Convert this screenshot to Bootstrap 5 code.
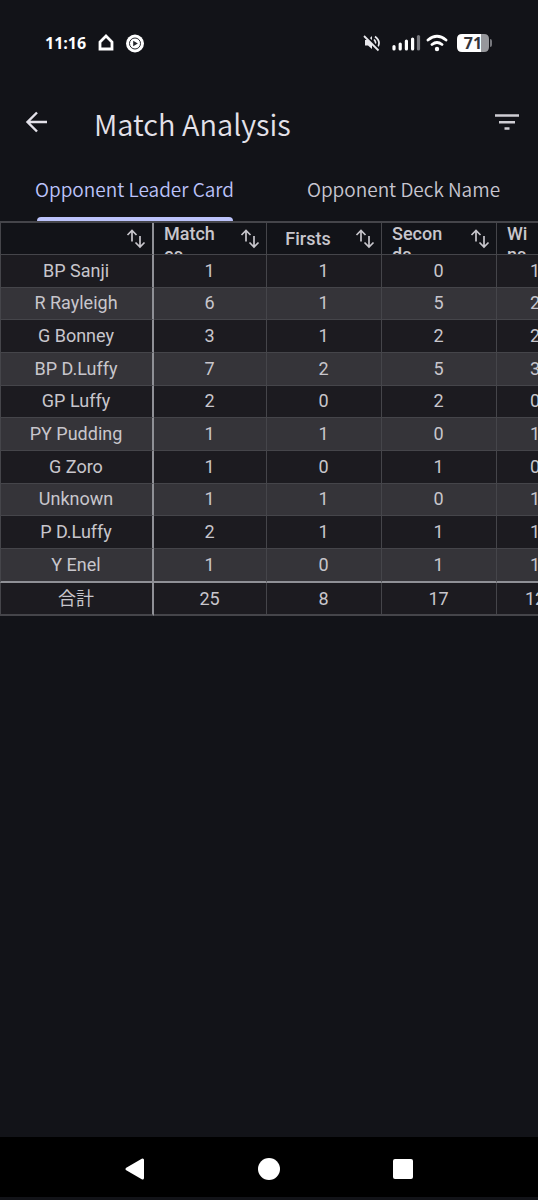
<!DOCTYPE html>
<html lang="en" data-bs-theme="dark">
<head>
<meta charset="utf-8">
<meta name="viewport" content="width=device-width, initial-scale=1">
<title>Match Analysis</title>
<link href="https://cdn.jsdelivr.net/npm/bootstrap@5.3.0/dist/css/bootstrap.min.css" rel="stylesheet">
<style>
  :root { --app-bg: #121318; --line: #45454a; --line-strong: #8f9096; --accent: #bcc3fb; }
  body { background: var(--app-bg); color: #e3e1e9; font-family: Roboto, "Noto Sans CJK JP", sans-serif; }
  svg { display: block; flex: none; }
  .status-bar { height: 86px; padding: 0 46px 0 45px; color: #fff; }
  .clock { font: 700 16px/24px "Open Sans", sans-serif; }
  .battery { position: relative; width: 35px; height: 18px; }
  .battery-level { position: absolute; inset: 0 3px 0 0; color: #33343a; font: 700 16px/18px "Open Sans", sans-serif; text-align: center; }
  .app-bar { height: 72px; padding: 0 18px 0 24px; }
  .app-title { color: #e3e1e9; font: 350 29px/40px "Noto Sans CJK JP", sans-serif; margin: 2px 0 0 45px; }
  .icon-button { border: 0; padding: 0; background: none; color: inherit; }
  .tabs { height: 63px; }
  .tab-link { border: 0; background: none; padding: 0; color: #c7c5d0; font: 350 19px/28px "Noto Sans CJK JP", sans-serif; }
  .tab-text { display: flex; align-items: center; height: 63px; padding-bottom: 2px; }
  .tab-link.active { color: var(--accent); position: relative; }
  .tab-link.active::after { content: ""; position: absolute; left: 50%; bottom: 0; width: 196px; height: 4px; transform: translateX(-50%); border-radius: 4px 4px 0 0; background: var(--accent); }
  .table-scroll { overflow: hidden; }
  .stats { width: 575px; table-layout: fixed; border-collapse: separate; border-spacing: 0; border-top: 2px solid var(--line); font-size: 18px; line-height: 22px; color: #c8c6cc; text-align: center; }
  .stats tbody { height: 328px; }
  .stats tfoot { height: 33px; }
  .col-name { width: 154px; }
  .col-stat { width: 115px; }
  .col-first { width: 113px; }
  .stats th, .stats td { padding: 0 1px 0 0; font-weight: 400; border: 0 solid var(--line); border-right-width: 1px; border-bottom-width: 1px; background: #1c1b20; }
  .stats tr > :first-child { border-left-width: 1px; border-right: 2px solid var(--line-strong); }
  .stats tbody tr:nth-child(even) > * { background: #353439; }
  .stats tbody tr:last-child > * { border-bottom: 2px solid var(--line-strong); }
  .stats tfoot tr > * { border-bottom-width: 2px; }
  .stats thead th { background: var(--app-bg); font-weight: 500; line-height: 21px; }
  .head-cell { display: flex; height: 31px; overflow: hidden; padding: 0 5px 0 10px; }
  .head-label { flex: 1 1 0; min-width: 0; margin: auto 16px auto 0; }
  .head-label.wrapped { text-align: left; margin-right: 0; }
  .nav-bar { height: 60px; background: #000; padding: 4px 12.5% 0; margin-bottom: 3px; color: #fff; }
</style>
</head>
<body>
<svg width="0" height="0" class="position-absolute" aria-hidden="true">
  <symbol id="sort" viewBox="0 0 20 20"><path d="M6 12.500V2M1.500 6L6 1.500 10.500 6M14 7v10.500M9.500 13.500L14 18l4.500-4.500" fill="none" stroke="currentColor" stroke-width="1.700"/></symbol>
</svg>
<div class="d-flex flex-column min-vh-100">
  <header>
    <div class="status-bar d-flex align-items-center justify-content-between">
      <div class="d-flex align-items-center">
        <span class="clock">11:16</span>
        <svg class="ms-2 me-2" width="24" height="20" viewBox="0 0 24 20" aria-hidden="true"><path d="M6 9l6-6 6 6v7H6z" fill="none" stroke="#fff" stroke-width="2.8"/></svg>
        <svg width="18" height="20" viewBox="1 0 18 20" aria-hidden="true"><circle cx="10" cy="10.500" r="9" fill="#fff"/><circle cx="10" cy="10.500" r="5.500" fill="none" stroke="#24252a" stroke-width="1"/><path d="M8.200 7.800l4.600 2.700-4.600 2.700z" fill="#24252a"/></svg>
      </div>
      <div class="d-flex align-items-center">
        <svg width="18" height="18" viewBox="0 0 18 18" aria-hidden="true"><path d="M2 6h3l4-4v13l-4-3.500H2z" fill="#e8e8ec"/><path d="M11 5.500q3 3 0 6M12 2.500q6.500 5 2.500 11" fill="none" stroke="#e8e8ec" stroke-width="1.700"/><path d="M2 1l15 15" stroke="#121318" stroke-width="2.500"/><path d="M1 2l14.500 14.500" stroke="#e8e8ec" stroke-width="1.800"/></svg>
        <svg class="ms-2" width="32" height="18" viewBox="0 0 32 18" aria-hidden="true"><g fill="none" stroke="#fff" stroke-width="3.200" stroke-linecap="round"><path d="M5 12.500v2.500M11.200 10v5M17.400 7v8M23.600 5v10"/><path d="M29.500 2.500v12.500" stroke="#77787d"/></g></svg>
        <svg class="ms-1" width="24" height="18" viewBox="0 0 24 18" aria-hidden="true"><g fill="none" stroke="#fff" stroke-width="2.800" stroke-linecap="round"><path d="M3 6q9-7.500 18 0M7 10.500q5-4 10 0"/></g><circle cx="12" cy="15" r="2.200" fill="#fff"/></svg>
        <div class="battery ms-2">
          <svg width="35" height="18" viewBox="0 0 35 18" aria-hidden="true"><path d="M5 0h19v18H5q-5 0-5-5V5q0-5 5-5z" fill="#fff"/><path d="M24 0h3q5 0 5 5v8q0 5-5 5h-3z" fill="#96979b"/><path d="M33 5q2 0 2 2v4q0 2-2 2z" fill="#77787d"/></svg>
          <span class="battery-level">71</span>
        </div>
      </div>
    </div>
    <div class="app-bar d-flex align-items-center">
      <button class="icon-button" type="button" aria-label="Back"><svg width="25" height="24" viewBox="0 0 25 24"><path d="M23 12H4M13 2.500L3.500 12l9.500 9.500" fill="none" stroke="currentColor" stroke-width="2.400"/></svg></button>
      <h1 class="app-title">Match Analysis</h1>
      <button class="icon-button ms-auto" type="button" aria-label="Filter"><svg width="26" height="24" viewBox="0 0 26 24"><path d="M1 4.200h24v2.600H1zM5 11h16v2.600H5zM10.500 17.200h5v2.600h-5z" fill="#cfced4"/></svg></button>
    </div>
  </header>
  <main>
    <div class="tabs d-flex" role="tablist">
      <button class="tab-link active w-50 d-flex justify-content-center" type="button" role="tab" aria-selected="true"><span class="tab-text">Opponent Leader Card</span></button>
      <button class="tab-link w-50 d-flex justify-content-center" type="button" role="tab" aria-selected="false"><span class="tab-text">Opponent Deck Name</span></button>
    </div>
    <div class="table-scroll">
      <table class="stats">
        <colgroup><col class="col-name"><col class="col-first"><col class="col-stat"><col class="col-stat"><col></colgroup>
        <thead>
          <tr>
            <th scope="col"><div class="head-cell"><span class="head-label"></span><svg class="my-auto" width="20" height="20" aria-hidden="true"><use href="#sort"/></svg></div></th>
            <th scope="col"><div class="head-cell"><span class="head-label wrapped">Match<br>es</span><svg class="my-auto" width="20" height="20" aria-hidden="true"><use href="#sort"/></svg></div></th>
            <th scope="col"><div class="head-cell"><span class="head-label">Firsts</span><svg class="my-auto" width="20" height="20" aria-hidden="true"><use href="#sort"/></svg></div></th>
            <th scope="col"><div class="head-cell"><span class="head-label wrapped">Secon<br>ds</span><svg class="my-auto" width="20" height="20" aria-hidden="true"><use href="#sort"/></svg></div></th>
            <th scope="col"><div class="head-cell"><span class="head-label wrapped">Wi<br>ns</span><svg class="my-auto" width="20" height="20" aria-hidden="true"><use href="#sort"/></svg></div></th>
          </tr>
        </thead>
        <tbody>
          <tr><th scope="row">BP Sanji</th><td>1</td><td>1</td><td>0</td><td>1</td></tr>
          <tr><th scope="row">R Rayleigh</th><td>6</td><td>1</td><td>5</td><td>2</td></tr>
          <tr><th scope="row">G Bonney</th><td>3</td><td>1</td><td>2</td><td>2</td></tr>
          <tr><th scope="row">BP D.Luffy</th><td>7</td><td>2</td><td>5</td><td>3</td></tr>
          <tr><th scope="row">GP Luffy</th><td>2</td><td>0</td><td>2</td><td>0</td></tr>
          <tr><th scope="row">PY Pudding</th><td>1</td><td>1</td><td>0</td><td>1</td></tr>
          <tr><th scope="row">G Zoro</th><td>1</td><td>0</td><td>1</td><td>0</td></tr>
          <tr><th scope="row">Unknown</th><td>1</td><td>1</td><td>0</td><td>1</td></tr>
          <tr><th scope="row">P D.Luffy</th><td>2</td><td>1</td><td>1</td><td>1</td></tr>
          <tr><th scope="row">Y Enel</th><td>1</td><td>0</td><td>1</td><td>1</td></tr>
        </tbody>
        <tfoot>
          <tr><th scope="row" lang="ja">合計</th><td>25</td><td>8</td><td>17</td><td>12</td></tr>
        </tfoot>
      </table>
    </div>
  </main>
  <nav class="nav-bar d-flex mt-auto" aria-label="System">
    <button class="icon-button flex-fill d-flex align-items-center justify-content-center" type="button" aria-label="Back"><svg width="22" height="24" viewBox="0 0 22 24"><path d="M18.500 3v18L3 12z" fill="currentColor" stroke="currentColor" stroke-width="3" stroke-linejoin="round"/></svg></button>
    <button class="icon-button flex-fill d-flex align-items-center justify-content-center" type="button" aria-label="Home"><svg width="22" height="22" viewBox="0 0 22 22"><circle cx="11" cy="11" r="11" fill="currentColor"/></svg></button>
    <button class="icon-button flex-fill d-flex align-items-center justify-content-center" type="button" aria-label="Recent apps"><svg width="22" height="22" viewBox="0 0 22 22"><rect x="0" y="1" width="20" height="20" rx="2" fill="currentColor"/></svg></button>
  </nav>
</div>
<script src="https://cdn.jsdelivr.net/npm/bootstrap@5.3.0/dist/js/bootstrap.bundle.min.js"></script>
</body>
</html>
